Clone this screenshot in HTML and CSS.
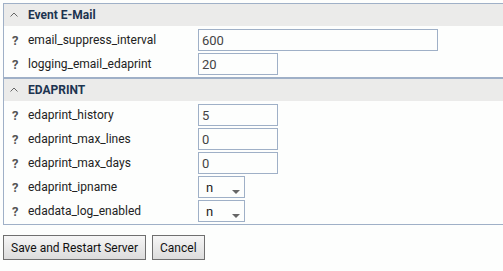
FILE: index.html
```html
<!DOCTYPE html>
<html>
<head>
<meta charset="utf-8">
<link rel="stylesheet" href="styles.css">
</head>
<body>
<div class="panel">
  <div class="section">
    <div class="section-head">
      <svg class="chev" width="8" height="5" viewBox="0 0 8 5"><polyline points="0.5,4.5 4,1 7.5,4.5" fill="none" stroke="#666" stroke-width="1"/></svg>
      <span>Event E-Mail</span>
    </div>
    <div class="rows">
      <div class="row"><span class="q">?</span><span class="label">email_suppress_interval</span><input class="field wide" value="600"></div>
      <div class="row"><span class="q">?</span><span class="label">logging_email_edaprint</span><input class="field" value="20"></div>
    </div>
  </div>
  <div class="section second">
    <div class="section-head">
      <svg class="chev" width="8" height="5" viewBox="0 0 8 5"><polyline points="0.5,4.5 4,1 7.5,4.5" fill="none" stroke="#666" stroke-width="1"/></svg>
      <span>EDAPRINT</span>
    </div>
    <div class="rows">
      <div class="row"><span class="q">?</span><span class="label">edaprint_history</span><input class="field" value="5"></div>
      <div class="row"><span class="q">?</span><span class="label">edaprint_max_lines</span><input class="field" value="0"></div>
      <div class="row"><span class="q">?</span><span class="label">edaprint_max_days</span><input class="field" value="0"></div>
      <div class="row"><span class="q">?</span><span class="label">edaprint_ipname</span><div class="select"><span>n</span><svg class="arrow" width="8" height="4" viewBox="0 0 8 4"><polygon points="0,0 8,0 4,4" fill="#666"/></svg></div></div>
      <div class="row"><span class="q">?</span><span class="label">edadata_log_enabled</span><div class="select"><span>n</span><svg class="arrow" width="8" height="4" viewBox="0 0 8 4"><polygon points="0,0 8,0 4,4" fill="#666"/></svg></div></div>
    </div>
  </div>
</div>
<div class="buttons">
  <button class="btn">Save and Restart Server</button>
  <button class="btn">Cancel</button>
</div>
</body>
</html>
```
FILE: styles.css
```css
html, body {
  margin: 0;
  padding: 0;
  background: #fdfefd;
  overflow: hidden;
}
body {
  padding: 3px 0 3px 3px;
  font-family: Roboto, "Liberation Sans", sans-serif;
  font-size: 12px;
  color: #222;
}
.panel {
  border: 1px solid #9fb0c7;
  border-right: none;
}
.section.second {
  border-top: 2px solid #9fb0c7;
}
.section-head {
  height: 22px;
  background: #ebebea;
  display: flex;
  align-items: center;
  font-weight: bold;
  font-size: 12px;
  color: #1d3450;
}
.chev {
  margin-left: 6px;
  margin-right: 10px;
  margin-top: -1px;
}
.rows {
  padding: 2px 0 1px;
}
.row {
  height: 24px;
  display: flex;
  align-items: center;
}
.q {
  width: 24px;
  padding-left: 8px;
  box-sizing: border-box;
  font-weight: bold;
  font-size: 13px;
  color: #555;
}
.label {
  width: 170px;
  color: #222;
}
.field {
  box-sizing: border-box;
  width: 80px;
  height: 22px;
  border: 1px solid #9fb0c7;
  background: #fdfefd;
  font-family: Roboto, "Liberation Sans", sans-serif;
  font-size: 13px;
  color: #444;
  padding: 0 3px;
  margin: 0;
  outline: none;
}
.field.wide {
  width: 240px;
}
.select {
  box-sizing: border-box;
  width: 47px;
  height: 22px;
  border: 1px solid #9fb0c7;
  display: flex;
  align-items: center;
  padding-left: 7px;
  position: relative;
  font-size: 13px;
  color: #222;
}
.arrow {
  position: absolute;
  left: 33px;
  top: 13px;
}
.buttons {
  margin-top: 10px;
  display: flex;
  gap: 6px;
}
.btn {
  height: 25px;
  border: 1px solid #6f6f6f;
  background: linear-gradient(#f6f6f6, #dcdcdc);
  font-family: Roboto, "Liberation Sans", sans-serif;
  font-size: 12px;
  color: #111;
  padding: 0 7px;
  margin: 0;
  border-radius: 0;
}
```
